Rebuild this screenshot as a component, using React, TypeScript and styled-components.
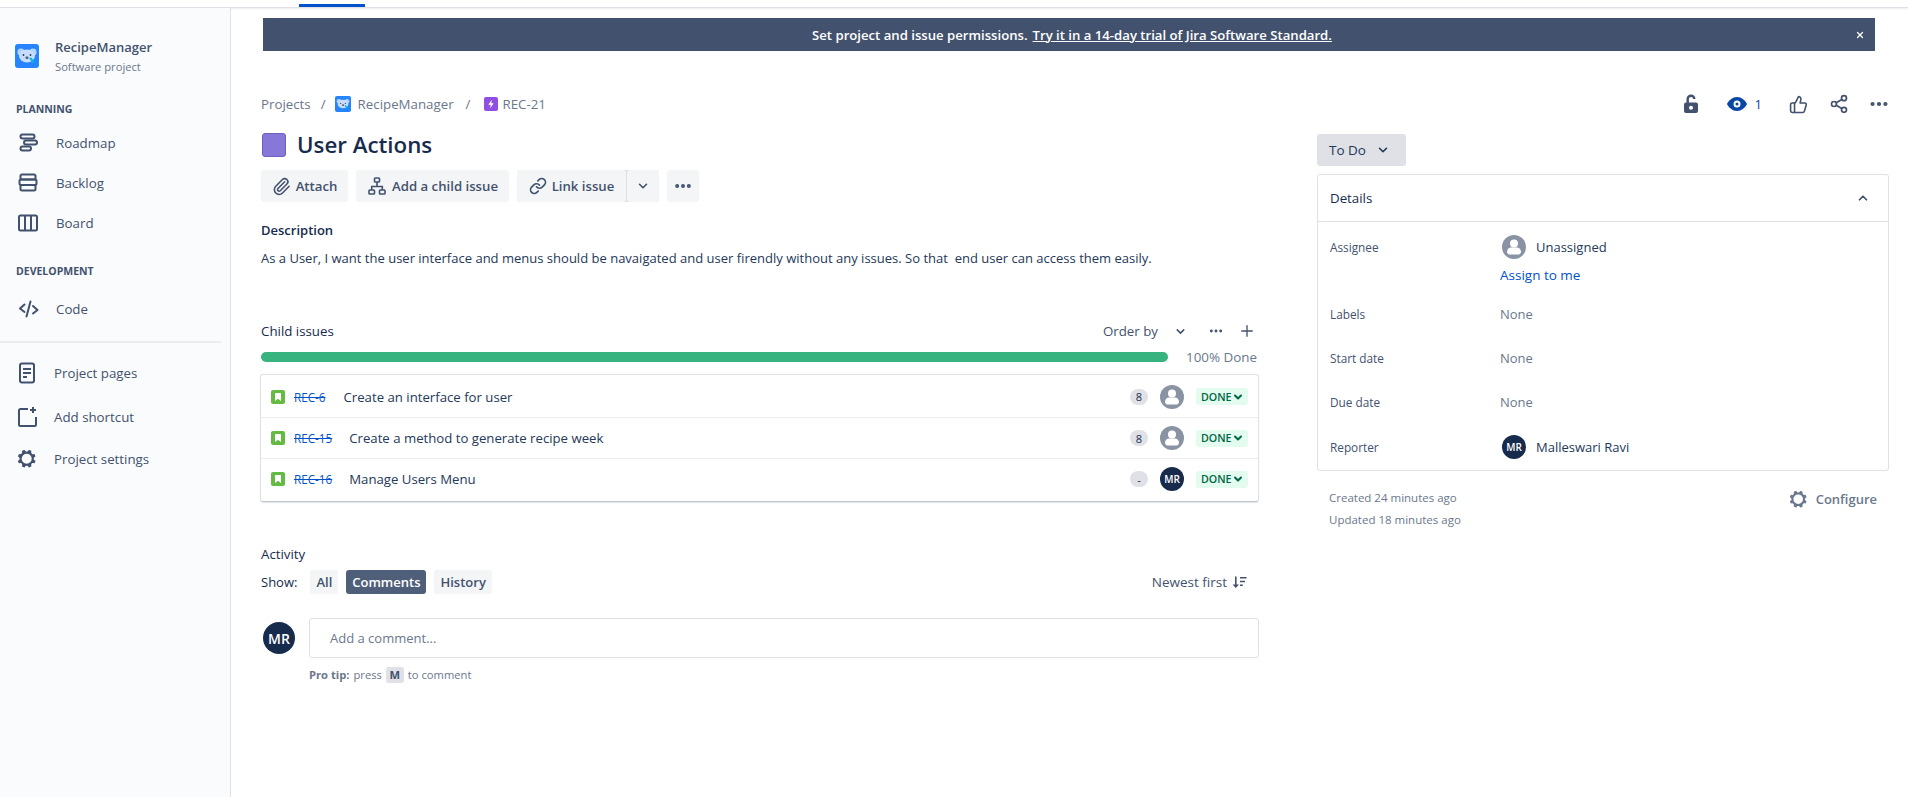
import { FC } from 'react';
import styled, { createGlobalStyle } from 'styled-components';
import { ChevronDown, ChevronUp, Link as LinkIcon, MoreHorizontal, Paperclip, Plus, Share2, ThumbsUp, X } from 'lucide-react';

const GlobalStyle = createGlobalStyle`
  html, body {
    margin: 0;
    background: #fff;
    font-family: "Open Sans", "Noto Sans", sans-serif;
    font-size: 13px;
    color: #172b4d;
  }
  * { box-sizing: border-box; }
`;

const Page = styled.div`
  height: 797px;
  overflow: hidden;
  display: flex;
  flex-direction: column;
`;

const TopBar = styled.div`
  height: 8px;
  flex: none;
  padding-left: 299px;
  display: flex;
  align-items: flex-end;
  border-bottom: 1px solid #dfe1e6;
  box-shadow: 0 1px 2px rgba(9, 30, 66, 0.08);
`;

const TopTab = styled.div`
  width: 66px;
  height: 3px;
  background: #0052cc;
`;

const Body = styled.div`
  flex: 1;
  display: flex;
  min-height: 0;
`;

const Sidebar = styled.nav`
  width: 231px;
  flex: none;
  background: #fafbfc;
  border-right: 1px solid #dfe1e6;
  padding-top: 28px;
  color: #42526e;
`;

const ProjectHead = styled.div`
  display: flex;
  align-items: center;
  gap: 16px;
  padding-left: 15px;
  height: 40px;
`;

const ProjectName = styled.div`
  font-size: 13px;
  font-weight: 600;
  line-height: 20px;
`;

const ProjectType = styled.div`
  font-size: 11.2px;
  line-height: 19px;
  color: #6b778c;
`;

const SectionTitle = styled.div<{ $top: number; $bottom: number }>`
  margin: ${({ $top }) => $top}px 0 ${({ $bottom }) => $bottom}px;
  padding-left: 16px;
  height: 20px;
  line-height: 20px;
  font-size: 10.5px;
  font-weight: 700;
`;

const NavItem = styled.div<{ $left?: number; $gap?: number; $height?: number }>`
  display: flex;
  align-items: center;
  height: ${({ $height }) => $height ?? 40}px;
  padding-left: ${({ $left }) => $left ?? 16}px;
  gap: ${({ $gap }) => $gap ?? 16}px;
  font-size: 13.3px;
  svg { flex: none; }
`;

const NavDivider = styled.div`
  width: 221px;
  height: 2px;
  background: #ebecf0;
  margin: 12px 0 8px;
`;

const Main = styled.main`
  flex: 1;
  min-width: 0;
  padding: 10px 19px 0 30px;
`;

const Banner = styled.div`
  position: relative;
  margin: 0 -5px 0 2px;
  width: 1612px;
  height: 33px;
  background: #42526e;
  color: #fff;
  display: flex;
  align-items: center;
  justify-content: center;
  font-size: 13.15px;
  font-weight: 600;
  padding-left: 6px;
  gap: 5px;
`;

const BannerLink = styled.span`
  text-decoration: underline;
`;

const BannerClose = styled.span`
  position: absolute;
  right: 10px;
  top: 12px;
  display: flex;
`;

const CrumbRow = styled.div`
  height: 24px;
  margin-top: 41px;
  display: flex;
  align-items: center;
  justify-content: space-between;
`;

const Crumbs = styled.div`
  display: flex;
  align-items: center;
  color: #6b778c;
  font-size: 13.3px;
`;

const CrumbSep = styled.span<{ $l: number; $r: number }>`
  margin: 0 ${({ $r }) => $r}px 0 ${({ $l }) => $l}px;
`;

const CrumbText = styled.span<{ $left: number }>`
  margin-left: ${({ $left }) => $left}px;
`;

const Actions = styled.div`
  display: flex;
  align-items: center;
  margin-right: -1px;
  color: #42526e;
`;

const Watchers = styled.span`
  display: flex;
  align-items: center;
  gap: 6px;
  margin: 0 27px 0 22px;
  color: #0747a6;
  font-size: 13px;
`;

const ShareSlot = styled.span`
  display: flex;
  margin: 0 19px 0 21px;
`;

const Columns = styled.div`
  display: flex;
  gap: 58px;
`;

const LeftColumn = styled.div`
  width: 998px;
  flex: none;
`;

const RightColumn = styled.div`
  width: 572px;
  flex: none;
  padding-top: 18px;
`;

const TitleRow = styled.div`
  display: flex;
  align-items: center;
  gap: 12px;
  height: 36px;
  margin-top: 11px;
  padding-left: 1px;
`;

const Swatch = styled.div`
  width: 24px;
  height: 24px;
  background: #8777d9;
  border: 1px solid #6f5fbf;
  border-radius: 3px;
`;

const Title = styled.h1`
  margin: 0 0 0 -1px;
  font-size: 22.3px;
  font-weight: 600;
  line-height: 36px;
  color: #172b4d;
`;

const Toolbar = styled.div`
  display: flex;
  gap: 8px;
  margin-top: 7px;
`;

const ToolButton = styled.div<{ $width: number }>`
  height: 32px;
  width: ${({ $width }) => $width}px;
  display: flex;
  align-items: center;
  justify-content: center;
  gap: 5px;
  background: #f4f5f7;
  border-radius: 3px;
  color: #42526e;
  font-size: 13.2px;
  font-weight: 600;
`;

const SplitButton = styled.div`
  display: flex;
  gap: 1px;
  background: #dfe1e6;
  border-radius: 3px;
`;

const SectionHeading = styled.div`
  font-size: 13.3px;
  font-weight: 500;
  line-height: 20px;
`;

const DescriptionHeading = styled(SectionHeading)`
  margin-top: 18px;
  font-size: 13px;
  font-weight: 600;
`;

const DescriptionText = styled.p`
  margin: 8px 0 0;
  line-height: 20px;
  font-size: 13.02px;
  color: #253858;
`;

const ChildHead = styled.div`
  display: flex;
  align-items: center;
  justify-content: space-between;
  margin-top: 53px;
  height: 20px;
`;

const ChildTools = styled.div`
  display: flex;
  align-items: center;
  color: #42526e;
  font-size: 13.3px;
  padding-right: 3px;
`;

const OrderLabel = styled.span`
  font-weight: 500;
  margin-right: 16px;
`;

const ChildDots = styled.span`
  display: flex;
  margin: 0 14px 0 21px;
`;

const ProgressRow = styled.div`
  display: flex;
  align-items: center;
  margin-top: 11px;
  height: 10px;
  gap: 18px;
`;

const ProgressBar = styled.div`
  width: 907px;
  height: 10px;
  background: #36b37e;
  border-radius: 5px;
`;

const ProgressLabel = styled.span`
  color: #6b778c;
  font-size: 13.4px;
`;

const IssueList = styled.div`
  margin-top: 12px;
  width: 999px;
  margin-left: -1px;
  padding: 1px 0 2px;
  border: 1px solid #dfe1e6;
  border-bottom: 1px solid #c1c7d0;
  border-radius: 3px;
  box-shadow: 0 1px 1px rgba(9, 30, 66, 0.12);
`;

const IssueRow = styled.div`
  display: flex;
  align-items: center;
  height: 41px;
  padding: 0 10px;
  & + & { border-top: 1px solid #ebecf0; }
`;

const IssueKey = styled.span`
  margin-left: 9px;
  font-size: 11.7px;
  color: #0052cc;
  text-decoration: line-through;
`;

const IssueSummary = styled.span<{ $gap: number }>`
  margin-left: ${({ $gap }) => $gap}px;
  font-size: 13.2px;
  color: #253858;
  flex: 1;
`;

const Estimate = styled.span`
  width: 18px;
  height: 16px;
  border-radius: 8px;
  background: #dfe1e6;
  display: flex;
  align-items: center;
  justify-content: center;
  font-size: 11px;
  margin-right: 12px;
`;

const Lozenge = styled.span`
  margin-left: 12px;
  width: 52px;
  height: 17px;
  border-radius: 3px;
  background: #e3fcef;
  color: #006644;
  display: flex;
  align-items: center;
  padding-left: 5px;
  font-size: 10.7px;
  font-weight: 600;
`;

const InitialsAvatar = styled.div<{ $size: number }>`
  width: ${({ $size }) => $size}px;
  height: ${({ $size }) => $size}px;
  border-radius: 50%;
  background: #172b4d;
  color: #fff;
  display: flex;
  align-items: center;
  justify-content: center;
  flex: none;
  font-size: ${({ $size }) => ($size > 30 ? 14 : 10)}px;
  font-weight: 600;
`;

const ActivityHeading = styled(SectionHeading)`
  margin-top: 42px;
`;

const ShowRow = styled.div`
  display: flex;
  align-items: center;
  margin-top: 6px;
  height: 24px;
  gap: 8px;
  font-size: 13px;
`;

const ShowLabel = styled.span`
  margin-right: 5px;
`;

const FilterButton = styled.span<{ $active?: boolean }>`
  height: 24px;
  padding: 0 6px;
  display: flex;
  align-items: center;
  border-radius: 3px;
  font-weight: 600;
  font-size: 13px;
  background: ${({ $active }) => ($active ? '#505f79' : '#f4f5f7')};
  color: ${({ $active }) => ($active ? '#fff' : '#42526e')};
`;

const NewestFirst = styled.span`
  margin-left: auto;
  margin-right: 12px;
  display: flex;
  align-items: center;
  gap: 5px;
  font-size: 13.5px;
  color: #42526e;
  font-weight: 500;
`;

const CommentRow = styled.div`
  display: flex;
  align-items: center;
  gap: 14px;
  margin-top: 24px;
  padding-left: 2px;
`;

const CommentInput = styled.div`
  flex: 1;
  height: 40px;
  border: 1px solid #dfe1e6;
  border-radius: 3px;
  display: flex;
  align-items: center;
  padding-left: 20px;
  color: #6b778c;
  font-size: 13px;
`;

const ProTip = styled.div`
  margin: 9px 0 0 48px;
  display: flex;
  align-items: center;
  gap: 4px;
  font-size: 11.2px;
  color: #6b778c;
  line-height: 16px;
`;

const ProTipStrong = styled.strong`
  font-weight: 700;
`;

const KeyCap = styled.span`
  background: #dfe1e6;
  color: #42526e;
  font-weight: 700;
  border-radius: 3px;
  width: 18px;
  height: 16px;
  display: flex;
  align-items: center;
  justify-content: center;
`;

const StatusButton = styled.div`
  width: 89px;
  height: 32px;
  background: #dfe1e6;
  border-radius: 3px;
  display: flex;
  align-items: center;
  padding-left: 12px;
  gap: 10px;
  font-size: 13.5px;
  font-weight: 500;
  color: #253858;
`;

const DetailsCard = styled.div`
  margin-top: 8px;
  height: 297px;
  border: 1px solid #dfe1e6;
  border-radius: 3px;
`;

const DetailsHead = styled.div`
  height: 47px;
  border-bottom: 1px solid #dfe1e6;
  display: flex;
  align-items: center;
  justify-content: space-between;
  padding: 0 18px 0 12px;
  font-weight: 500;
  font-size: 13.3px;
  color: #42526e;
`;

const DetailsHeadTitle = styled.span`
  color: #172b4d;
`;

const DetailsBody = styled.div`
  padding: 13px 12px 0;
`;

const DetailRow = styled.div<{ $height: number }>`
  display: grid;
  grid-template-columns: 170px 1fr;
  height: ${({ $height }) => $height}px;
  align-items: start;
`;

const DetailLabel = styled.span`
  font-size: 11.8px;
  font-weight: 500;
  color: #42526e;
  line-height: 24px;
`;

const DetailValue = styled.div`
  display: flex;
  align-items: center;
  gap: 10px;
  height: 24px;
  padding-left: 2px;
  font-size: 13px;
  color: #253858;
`;

const NoneValue = styled.span`
  color: #6b778c;
  font-size: 13px;
  line-height: 24px;
`;

const AssignLink = styled.div`
  color: #0052cc;
  font-size: 13.5px;
  line-height: 20px;
  margin-top: 6px;
`;

const Footer = styled.div`
  display: flex;
  justify-content: space-between;
  margin-top: 16px;
  padding: 0 12px;
`;

const Timestamps = styled.div`
  color: #6b778c;
  font-size: 11.5px;
  line-height: 22px;
`;

const Configure = styled.div`
  display: flex;
  align-items: center;
  gap: 8px;
  height: 20px;
  margin-top: 2px;
  color: #6b778c;
  font-weight: 600;
  font-size: 13px;
`;

const GEAR =
  'M11.701 16.7a5.002 5.002 0 110-10.003 5.002 5.002 0 010 10.004m8.368-3.117a1.995 1.995 0 01-1.346-1.885c0-.876.563-1.613 1.345-1.885a.48.48 0 00.315-.574 8.947 8.947 0 00-.836-1.993.477.477 0 00-.598-.195 2.04 2.04 0 01-1.29.08 1.988 1.988 0 01-1.404-1.395 2.04 2.04 0 01.076-1.297.478.478 0 00-.196-.597 8.98 8.98 0 00-1.975-.826.479.479 0 00-.574.314 1.995 1.995 0 01-1.885 1.346 1.994 1.994 0 01-1.884-1.345.482.482 0 00-.575-.315c-.708.2-1.379.485-2.004.842a.47.47 0 00-.198.582A2.002 2.002 0 014.445 7.06a.478.478 0 00-.595.196 8.946 8.946 0 00-.833 1.994.48.48 0 00.308.572 1.995 1.995 0 011.323 1.877c0 .867-.552 1.599-1.324 1.877a.479.479 0 00-.308.57 8.99 8.99 0 00.723 1.79.477.477 0 00.624.194c.595-.273 1.343-.264 2.104.238.117.077.225.185.302.3.527.8.512 1.58.198 2.188a.473.473 0 00.168.628 8.946 8.946 0 002.11.897.474.474 0 00.57-.313 1.995 1.995 0 011.886-1.353c.878 0 1.618.567 1.887 1.353a.475.475 0 00.57.313 8.964 8.964 0 002.084-.883.473.473 0 00.167-.631c-.318-.608-.337-1.393.191-2.195.077-.116.185-.225.302-.302.772-.511 1.527-.513 2.125-.23a.477.477 0 00.628-.19 8.925 8.925 0 00.728-1.793.478.478 0 00-.314-.573';

const Gear: FC<{ size: number }> = ({ size }) => (
  <svg width={size} height={size} viewBox="2 2 20 20" fill="currentColor">
    <path fillRule="evenodd" d={GEAR} />
  </svg>
);

const Koala: FC<{ size: number }> = ({ size }) => (
  <svg width={size} height={size} viewBox="0 0 24 24">
    <rect width="24" height="24" rx="3" fill="#2684ff" />
    <circle cx="6" cy="8" r="3.6" fill="#b3d4ff" />
    <circle cx="18" cy="8" r="3.6" fill="#b3d4ff" />
    <ellipse cx="12" cy="12" rx="8" ry="6.5" fill="#c7dcff" />
    <circle cx="8.5" cy="11" r="0.9" fill="#253858" />
    <circle cx="15.500" cy="11" r="0.9" fill="#253858" />
    <rect x="10.500" y="12.500" width="3" height="2.400" rx="1" fill="#505f79" />
    <path d="M15 14l4 4.500" stroke="#00b8d9" strokeWidth="2" />
  </svg>
);

const UserPlaceholder: FC<{ size: number }> = ({ size }) => (
  <svg width={size} height={size} viewBox="0 0 24 24" style={{ flex: 'none' }}>
    <circle cx="12" cy="12" r="12" fill="#8993a4" />
    <circle cx="12" cy="8.600" r="4" fill="#fff" />
    <path d="M5 17c0-3 2.500-4.400 4-4.400h6c1.500 0 4 1.400 4 4.400 0 1.500-1.500 2.600-3 2.600H8c-1.500 0-3-1.100-3-2.600z" fill="#fff" />
  </svg>
);

const StoryIcon = () => (
  <svg width="14" height="14" viewBox="0 0 14 14" style={{ flex: 'none' }}>
    <rect width="14" height="14" rx="2" fill="#65ba43" />
    <path d="M4 3.500a.5.5 0 01.5-.5h5a.5.5 0 01.5.5V11L7 8.800 4 11z" fill="#fff" />
  </svg>
);

const NavIcon: FC<{ name: string }> = ({ name }) => {
  const s = { fill: 'none', stroke: 'currentColor', strokeWidth: 2 };
  return (
    <svg width="24" height="24" viewBox="0 0 24 24" color="#42526e">
      {name === 'roadmap' && (
        <g {...s}>
          <rect x="4.500" y="3.500" width="14" height="4" rx="2" />
          <rect x="8" y="9.500" width="13" height="4" rx="2" />
          <rect x="4.500" y="15.500" width="10.500" height="4" rx="2" />
        </g>
      )}
      {name === 'backlog' && (
        <g {...s}>
          <rect x="4.500" y="3.500" width="15" height="5" rx="1.500" />
          <rect x="3.500" y="8.500" width="17" height="5.500" rx="1.500" />
          <rect x="4.500" y="14" width="15" height="5.500" rx="1.500" />
        </g>
      )}
      {name === 'board' && (
        <g {...s}>
          <rect x="3" y="4.500" width="18" height="15" rx="1.500" />
          <path d="M9 4.500v15M15 4.500v15" />
        </g>
      )}
      {name === 'code' && (
        <g {...s} strokeLinecap="round" strokeLinejoin="round">
          <path d="M8.500 7.500L4 11.500l4.500 3.500M17 9l4.500 4L17 16.500M14.500 4.500l-4 15" />
        </g>
      )}
      {name === 'pages' && (
        <g>
          <rect x="5" y="2.500" width="14" height="19" rx="2" {...s} />
          <path d="M8 7h8v2H8zM8 11h8v2H8zM8 15h4v2H8z" fill="currentColor" />
        </g>
      )}
      {name === 'shortcut' && (
        <g>
          <path d="M13 4H5.500A1.500 1.500 0 004 5.500v14A1.500 1.500 0 005.500 21h14a1.500 1.500 0 001.500-1.500V12" {...s} />
          <path d="M19 2v2h2v2h-2v2h-2V6h-2V4h2V2z" fill="currentColor" />
        </g>
      )}
    </svg>
  );
};

const LockIcon = () => (
  <svg width="24" height="24" viewBox="0 0 24 24" fill="#42526e">
    <path d="M7.500 11.500V7a4.500 4.500 0 019 0h-2.400a2.100 2.100 0 00-4.200 0v4.500z" />
    <path
      fillRule="evenodd"
      d="M7 10.500h10a2 2 0 012 2V19a2 2 0 01-2 2H7a2 2 0 01-2-2v-6.500a2 2 0 012-2zm5 3.300a2 2 0 100 4 2 2 0 000-4z"
    />
  </svg>
);

const EyeIcon = () => (
  <svg width="24" height="24" viewBox="0 0 24 24" fill="#0747a6">
    <path
      fillRule="evenodd"
      d="M12 5c5.600 0 9 4.800 10 7-1 2.200-4.400 7-10 7S3 14.200 2 12c1-2.200 4.400-7 10-7zm0 3.500a3.500 3.500 0 100 7 3.500 3.500 0 000-7zm0 2a1.500 1.500 0 110 3 1.500 1.500 0 010-3z"
    />
  </svg>
);

const TreeIcon = () => (
  <svg width="20" height="20" viewBox="0 0 20 20" fill="none" stroke="#42526e" strokeWidth="1.600">
    <rect x="7.500" y="2" width="5" height="4" rx="0.8" />
    <rect x="2" y="14" width="5.500" height="4" rx="0.8" />
    <rect x="12.500" y="14" width="5.500" height="4" rx="0.8" />
    <path d="M10 6v4.500M4.700 14v-3.500h10.600V14" />
  </svg>
);

const EpicSmall = () => (
  <svg width="14" height="14" viewBox="0 0 14 14">
    <rect width="14" height="14" rx="2" fill="#904ee2" />
    <path d="M7.800 2.800L4.300 7.800h2.400l-.5 3.400 3.500-5H7.300z" fill="#fff" />
  </svg>
);

const SortIcon = () => (
  <svg width="15" height="14" viewBox="0 0 15 14" fill="#42526e">
    <path d="M3 1.500h1.600v8H7L3.800 13 .6 9.500H3zM8 2h6.500v1.500H8zM8 5.800h5v1.500H8zM8 9.600h2.800v1.500H8z" />
  </svg>
);

const issues = [
  { key: 'REC-6', summary: 'Create an interface for user', gap: 18, estimate: '8', assigned: false },
  { key: 'REC-15', summary: 'Create a method to generate recipe week', gap: 17, estimate: '8', assigned: false },
  { key: 'REC-16', summary: 'Manage Users Menu', gap: 17, estimate: '-', assigned: true }
];

const App: FC = () => (
  <Page>
    <GlobalStyle />
    <TopBar>
      <TopTab />
    </TopBar>
    <Body>
      <Sidebar>
        <ProjectHead>
          <Koala size={24} />
          <div>
            <ProjectName>RecipeManager</ProjectName>
            <ProjectType>Software project</ProjectType>
          </div>
        </ProjectHead>
        <SectionTitle $top={23} $bottom={4}>PLANNING</SectionTitle>
        <NavItem><NavIcon name="roadmap" />Roadmap</NavItem>
        <NavItem><NavIcon name="backlog" />Backlog</NavItem>
        <NavItem><NavIcon name="board" />Board</NavItem>
        <SectionTitle $top={18} $bottom={8}>DEVELOPMENT</SectionTitle>
        <NavItem><NavIcon name="code" />Code</NavItem>
        <NavDivider />
        <NavItem $gap={15} $left={15} $height={44}><NavIcon name="pages" />Project pages</NavItem>
        <NavItem $gap={15} $left={15} $height={44}><NavIcon name="shortcut" />Add shortcut</NavItem>
        <NavItem $gap={17} $left={17}><Gear size={20} />Project settings</NavItem>
      </Sidebar>
      <Main>
        <Banner>
          <span>Set project and issue permissions.</span>
          <BannerLink>Try it in a 14-day trial of Jira Software Standard.</BannerLink>
          <BannerClose><X size={10} strokeWidth={3} /></BannerClose>
        </Banner>
        <CrumbRow>
          <Crumbs>
            Projects
            <CrumbSep $l={10} $r={9}>/</CrumbSep>
            <Koala size={16} />
            <CrumbText $left={7}>RecipeManager</CrumbText>
            <CrumbSep $l={12} $r={13}>/</CrumbSep>
            <EpicSmall />
            <CrumbText $left={5}>REC-21</CrumbText>
          </Crumbs>
          <Actions>
            <LockIcon />
            <Watchers><EyeIcon />1</Watchers>
            <ThumbsUp size={19} strokeWidth={2} />
            <ShareSlot><Share2 size={20} strokeWidth={2} /></ShareSlot>
            <MoreHorizontal size={22} strokeWidth={2.6} />
          </Actions>
        </CrumbRow>
        <Columns>
          <LeftColumn>
            <TitleRow>
              <Swatch />
              <Title>User Actions</Title>
            </TitleRow>
            <Toolbar>
              <ToolButton $width={87}><Paperclip size={19} strokeWidth={2} />Attach</ToolButton>
              <ToolButton $width={153}><TreeIcon />Add a child issue</ToolButton>
              <SplitButton>
                <ToolButton $width={109}><LinkIcon size={18} strokeWidth={2.2} />Link issue</ToolButton>
                <ToolButton $width={32}><ChevronDown size={14} strokeWidth={2.8} /></ToolButton>
              </SplitButton>
              <ToolButton $width={32}><MoreHorizontal size={20} strokeWidth={2.8} /></ToolButton>
            </Toolbar>
            <DescriptionHeading>Description</DescriptionHeading>
            <DescriptionText>
              As a User, I want the user interface and menus should be navaigated and user firendly without any issues. So that&nbsp; end user can access them easily.
            </DescriptionText>
            <ChildHead>
              <SectionHeading>Child issues</SectionHeading>
              <ChildTools>
                <OrderLabel>Order by</OrderLabel>
                <ChevronDown size={13} strokeWidth={2.8} />
                <ChildDots><MoreHorizontal size={16} strokeWidth={2.4} /></ChildDots>
                <Plus size={18} strokeWidth={1.8} />
              </ChildTools>
            </ChildHead>
            <ProgressRow>
              <ProgressBar />
              <ProgressLabel>100% Done</ProgressLabel>
            </ProgressRow>
            <IssueList>
              {issues.map(issue => (
                <IssueRow key={issue.key}>
                  <StoryIcon />
                  <IssueKey>{issue.key}</IssueKey>
                  <IssueSummary $gap={issue.gap}>{issue.summary}</IssueSummary>
                  <Estimate>{issue.estimate}</Estimate>
                  {issue.assigned ? <InitialsAvatar $size={24}>MR</InitialsAvatar> : <UserPlaceholder size={24} />}
                  <Lozenge>
                    DONE
                    <ChevronDown size={12} strokeWidth={4} />
                  </Lozenge>
                </IssueRow>
              ))}
            </IssueList>
            <ActivityHeading>Activity</ActivityHeading>
            <ShowRow>
              <ShowLabel>Show:</ShowLabel>
              <FilterButton>All</FilterButton>
              <FilterButton $active>Comments</FilterButton>
              <FilterButton>History</FilterButton>
              <NewestFirst>Newest first <SortIcon /></NewestFirst>
            </ShowRow>
            <CommentRow>
              <InitialsAvatar $size={32}>MR</InitialsAvatar>
              <CommentInput>Add a comment...</CommentInput>
            </CommentRow>
            <ProTip>
              <ProTipStrong>Pro tip:</ProTipStrong> press <KeyCap>M</KeyCap> to comment
            </ProTip>
          </LeftColumn>
          <RightColumn>
            <StatusButton>To Do <ChevronDown size={14} strokeWidth={2.8} /></StatusButton>
            <DetailsCard>
              <DetailsHead>
                <DetailsHeadTitle>Details</DetailsHeadTitle>
                <ChevronUp size={14} strokeWidth={3} />
              </DetailsHead>
              <DetailsBody>
                <DetailRow $height={67}>
                  <DetailLabel>Assignee</DetailLabel>
                  <div>
                    <DetailValue><UserPlaceholder size={24} />Unassigned</DetailValue>
                    <AssignLink>Assign to me</AssignLink>
                  </div>
                </DetailRow>
                <DetailRow $height={44}>
                  <DetailLabel>Labels</DetailLabel>
                  <NoneValue>None</NoneValue>
                </DetailRow>
                <DetailRow $height={44}>
                  <DetailLabel>Start date</DetailLabel>
                  <NoneValue>None</NoneValue>
                </DetailRow>
                <DetailRow $height={45}>
                  <DetailLabel>Due date</DetailLabel>
                  <NoneValue>None</NoneValue>
                </DetailRow>
                <DetailRow $height={24}>
                  <DetailLabel>Reporter</DetailLabel>
                  <DetailValue><InitialsAvatar $size={24}>MR</InitialsAvatar>Malleswari Ravi</DetailValue>
                </DetailRow>
              </DetailsBody>
            </DetailsCard>
            <Footer>
              <Timestamps>
                <div>Created 24 minutes ago</div>
                <div>Updated 18 minutes ago</div>
              </Timestamps>
              <Configure><Gear size={19} />Configure</Configure>
            </Footer>
          </RightColumn>
        </Columns>
      </Main>
    </Body>
  </Page>
);

export default App;
